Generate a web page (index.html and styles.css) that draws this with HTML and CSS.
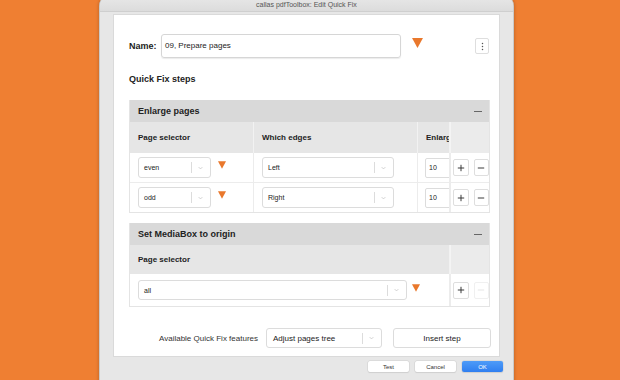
FILE: index.html
```html
<!DOCTYPE html>
<html lang="en">
<head>
    <meta charset="UTF-8">
    <title>callas pdfToolbox: Edit Quick Fix</title>
    <link rel="stylesheet" href="styles.css">
</head>
<body>
    <div class="window">
        <div class="titlebar">callas pdfToolbox: Edit Quick Fix</div>
        <div class="panel">
            <div class="name-row">
                <label class="name-label">Name:</label>
                <div class="name-input">09, Prepare pages</div>
                <svg class="flag flag-big" viewBox="0 0 12 11"><polygon points="0,0 12,0 6,11" /></svg>
                <button class="kebab">
                    <svg viewBox="0 0 4 12"><circle cx="2" cy="2" r="1"/><circle cx="2" cy="6" r="1"/><circle cx="2" cy="10" r="1"/></svg>
                </button>
            </div>

            <h2 class="steps-title">Quick Fix steps</h2>

            <div class="step">
                <div class="step-head">
                    <span>Enlarge pages</span>
                    <span class="collapse"></span>
                </div>
                <div class="grid grid-enlarge">
                    <div class="th">Page selector</div>
                    <div class="th">Which edges</div>
                    <div class="th">Enlarge by</div>
                    <div class="th th-act"></div>

                    <div class="td">
                        <div class="select sel-small"><span class="val">even</span><span class="sep"></span><svg class="chev" viewBox="0 0 8 5"><polyline points="1,1 4,4 7,1"/></svg></div>
                        <svg class="flag" viewBox="0 0 12 11"><polygon points="0,0 12,0 6,11" /></svg>
                    </div>
                    <div class="td">
                        <div class="select sel-edge"><span class="val">Left</span><span class="sep"></span><svg class="chev" viewBox="0 0 8 5"><polyline points="1,1 4,4 7,1"/></svg></div>
                    </div>
                    <div class="td td-clip"><div class="num">10</div></div>
                    <div class="td td-act">
                        <button class="sq"><svg viewBox="0 0 10 10"><path d="M5 1v8M1 5h8"/></svg></button>
                        <button class="sq"><svg viewBox="0 0 10 10"><path d="M1 5h8"/></svg></button>
                    </div>

                    <div class="td">
                        <div class="select sel-small"><span class="val">odd</span><span class="sep"></span><svg class="chev" viewBox="0 0 8 5"><polyline points="1,1 4,4 7,1"/></svg></div>
                        <svg class="flag" viewBox="0 0 12 11"><polygon points="0,0 12,0 6,11" /></svg>
                    </div>
                    <div class="td">
                        <div class="select sel-edge"><span class="val">Right</span><span class="sep"></span><svg class="chev" viewBox="0 0 8 5"><polyline points="1,1 4,4 7,1"/></svg></div>
                    </div>
                    <div class="td td-clip"><div class="num">10</div></div>
                    <div class="td td-act">
                        <button class="sq"><svg viewBox="0 0 10 10"><path d="M5 1v8M1 5h8"/></svg></button>
                        <button class="sq"><svg viewBox="0 0 10 10"><path d="M1 5h8"/></svg></button>
                    </div>
                </div>
            </div>

            <div class="step step-media">
                <div class="step-head">
                    <span>Set MediaBox to origin</span>
                    <span class="collapse"></span>
                </div>
                <div class="grid grid-media">
                    <div class="th">Page selector</div>
                    <div class="th th-act"></div>

                    <div class="td td-tall">
                        <div class="select sel-wide"><span class="val">all</span><span class="sep"></span><svg class="chev" viewBox="0 0 8 5"><polyline points="1,1 4,4 7,1"/></svg></div>
                        <svg class="flag" viewBox="0 0 12 11"><polygon points="0,0 12,0 6,11" /></svg>
                    </div>
                    <div class="td td-act">
                        <button class="sq"><svg viewBox="0 0 10 10"><path d="M5 1v8M1 5h8"/></svg></button>
                        <button class="sq sq-off"><svg viewBox="0 0 10 10"><path d="M1 5h8"/></svg></button>
                    </div>
                </div>
            </div>

            <div class="add-row">
                <span class="add-label">Available Quick Fix features</span>
                <div class="select sel-feature"><span class="val">Adjust pages tree</span><span class="sep"></span><svg class="chev" viewBox="0 0 8 5"><polyline points="1,1 4,4 7,1"/></svg></div>
                <button class="insert">Insert step</button>
            </div>
        </div>
        <div class="footer">
            <button class="fbtn">Test</button>
            <button class="fbtn">Cancel</button>
            <button class="fbtn fbtn-ok">OK</button>
        </div>
    </div>
</body>
</html>
```

FILE: styles.css
```css
body {
    margin: 0;
    background: #ef7f32;
    font-family: 'Liberation Sans', Arial, sans-serif;
    color: #222;
    overflow: hidden;
    height: 380px;
}

button {
    font-family: inherit;
    padding: 0;
    margin: 0;
}

.window {
    width: 413px;
    height: 392px;
    margin: -5px 0 0 100px;
    background: #e7e7e7;
    border-radius: 11px 11px 0 0;
    box-shadow: 0 0 0 1px #c9c9c9, 2px 0 3px rgba(0, 0, 0, 0.15), -2px 0 3px rgba(0, 0, 0, 0.15);
    display: flex;
    flex-direction: column;
}

.titlebar {
    height: 17px;
    padding-top: 5px;
    box-sizing: border-box;
    text-align: center;
    font-size: 7px;
    line-height: 10px;
    color: #555;
    background: linear-gradient(#e9e9e9, #dcdcdc);
    border-radius: 11px 11px 0 0;
    border-bottom: 1px solid #cfcfcf;
}

.panel {
    margin: 2px 13px 0 13px;
    height: 343px;
    box-sizing: border-box;
    background: #fff;
    padding: 19px 9px 0 15px;
    border: 1px solid #dadada;
}

/* name row */
.name-row {
    display: flex;
    align-items: center;
    height: 24px;
}

.name-label {
    width: 32px;
    font-size: 9px;
    font-weight: bold;
}

.name-input {
    width: 240px;
    height: 24px;
    box-sizing: border-box;
    border: 1px solid #d6d6d6;
    border-radius: 3px;
    box-shadow: 0 1px 1px rgba(0, 0, 0, 0.08);
    font-size: 8px;
    line-height: 22px;
    padding-left: 3px;
}

.flag {
    width: 8px;
    height: 8px;
    fill: #e9782c;
    flex: none;
}

.flag-big {
    width: 11px;
    height: 10px;
    margin: -6px 0 0 11px;
}

.kebab {
    margin-left: auto;
    margin-right: 1px;
    width: 14px;
    height: 16px;
    border: 1px solid #dedede;
    border-radius: 2px;
    background: #fff;
    display: flex;
    align-items: center;
    justify-content: center;
}

.kebab svg {
    width: 3px;
    height: 9px;
    fill: #555;
}

.steps-title {
    margin: 15px 0 15px;
    font-size: 9px;
    line-height: 12px;
}

/* steps */
.step {
    border: 1px solid #e4e4e4;
    border-top: none;
}

.step-media {
    margin-top: 10px;
}

.step-head {
    height: 22px;
    background: #d9d9d9;
    display: flex;
    align-items: center;
    justify-content: space-between;
    padding: 0 7px 0 8px;
    font-size: 9px;
    font-weight: bold;
}

.collapse {
    width: 8px;
    height: 1px;
    background: #666;
}

.grid {
    display: grid;
}

.grid-enlarge {
    grid-template-columns: 124px 164px 32px 1fr;
    grid-template-rows: 31px 29px 30px;
}

.grid-media {
    grid-template-columns: 320px 1fr;
    grid-template-rows: 29px 32px;
}

.th {
    background: #e6e6e6;
    border-right: 1px solid #f2f2f2;
    font-size: 8px;
    font-weight: bold;
    padding-left: 8px;
    display: flex;
    align-items: center;
    white-space: nowrap;
    overflow: hidden;
}

.th-act {
    background: #ebebeb;
    border-right: none;
    border-left: 1px solid #f4f4f4;
}

.td {
    display: flex;
    align-items: center;
    padding-left: 8px;
    border-right: 1px solid #ececec;
    border-top: 1px solid #ececec;
    min-width: 0;
}

.grid-enlarge .td:nth-child(5),
.grid-enlarge .td:nth-child(6),
.grid-enlarge .td:nth-child(7),
.grid-enlarge .td:nth-child(8) {
    border-top: none;
}

.grid-media .td {
    border-top: none;
}

.td-clip {
    overflow: hidden;
    padding-left: 7px;
}

.td-act {
    border-right: none;
    padding-left: 2px;
    gap: 5px;
    border-left: 1px solid #ececec;
}

.num {
    flex: none;
    width: 32px;
    height: 20px;
    box-sizing: border-box;
    border: 1px solid #dcdcdc;
    border-radius: 2px;
    font-size: 7px;
    line-height: 18px;
    padding-left: 3px;
}

.sq {
    width: 16px;
    height: 17px;
    border: 1px solid #dedede;
    border-radius: 2px;
    background: #fff;
    display: flex;
    align-items: center;
    justify-content: center;
}

.sq svg {
    width: 8px;
    height: 8px;
    stroke: #333;
    stroke-width: 1.2;
    fill: none;
}

.sq-off {
    border-color: #f0f0f0;
}

.sq-off svg {
    stroke: #e4e4e4;
}

/* selects */
.select {
    display: flex;
    align-items: center;
    height: 21px;
    box-sizing: border-box;
    border: 1px solid #dcdcdc;
    border-radius: 3px;
    background: #fff;
    font-size: 7px;
    padding-left: 5px;
    flex: none;
}

.select .val {
    flex: 1;
    white-space: nowrap;
}

.select .sep {
    width: 1px;
    height: 11px;
    background: #dcdcdc;
}

.select .chev {
    width: 5px;
    height: 4px;
    margin: 0 7px 0 6px;
    fill: none;
    stroke: #b8b8b8;
    stroke-width: 1;
}

.sel-small {
    width: 73px;
}

.sel-small + .flag {
    margin: -5px 0 0 7px;
}

.sel-edge {
    width: 132px;
}

.sel-wide {
    width: 269px;
    height: 20px;
}

.sel-wide + .flag {
    margin: -4px 0 0 5px;
}

/* bottom row */
.add-row {
    margin-top: 21px;
    display: flex;
    align-items: center;
    height: 20px;
}

.add-label {
    flex: none;
    margin-left: 30px;
    font-size: 8px;
    color: #333;
    white-space: nowrap;
}

.sel-feature {
    margin-left: 8px;
    width: 116px;
    height: 20px;
    font-size: 8px;
    padding-left: 6px;
}

.insert {
    flex: none;
    margin-left: 11px;
    width: 98px;
    height: 20px;
    border: 1px solid #dcdcdc;
    border-radius: 3px;
    background: #fff;
    font-size: 8px;
    color: #222;
}

/* footer */
.footer {
    display: flex;
    justify-content: flex-end;
    gap: 6px;
    padding: 4px 10px 0 0;
}

.fbtn {
    width: 41px;
    height: 11px;
    border: none;
    border-radius: 2px;
    background: #fff;
    box-shadow: 0 0 0 0.5px #cfcfcf, 0 1px 1px rgba(0, 0, 0, 0.1);
    font-size: 6px;
    color: #333;
}

.fbtn-ok {
    background: linear-gradient(#4e9bf8, #2f7ff0);
    color: #fff;
}
```
